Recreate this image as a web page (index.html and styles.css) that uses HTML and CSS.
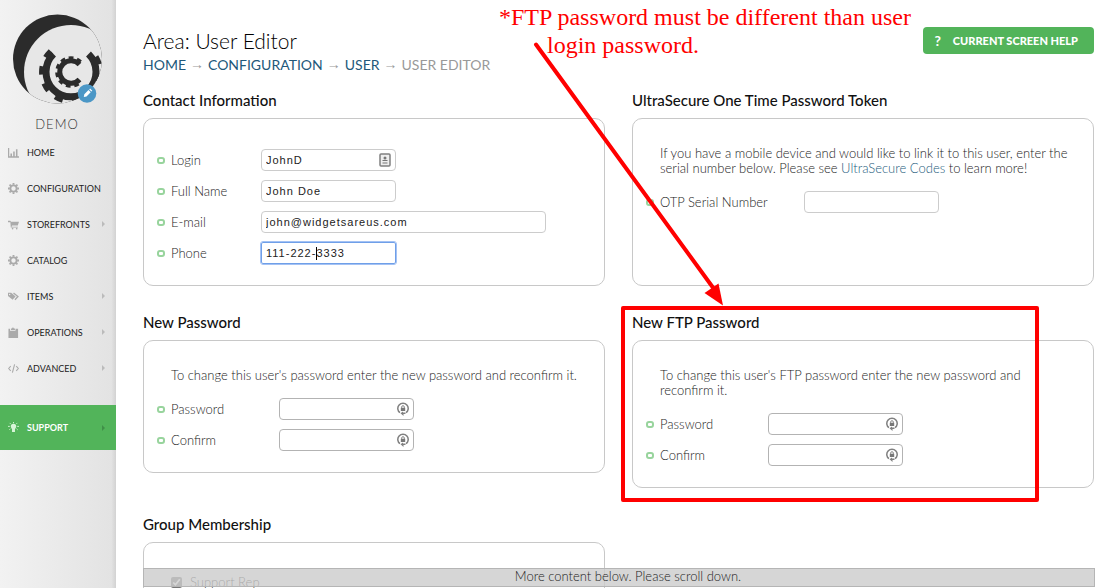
FILE: index.html
```html
<!DOCTYPE html>
<html lang="en">
<head>
<meta charset="utf-8">
<title>User Editor</title>
<link rel="stylesheet" href="styles.css">
</head>
<body>
<svg class="defs" aria-hidden="true">
  <symbol id="gear" viewBox="0 0 12 12"><circle cx="6" cy="6" r="3.400" fill="none" stroke="currentColor" stroke-width="2"/><path d="M6 0v2M6 10v2M0 6h2M10 6h2M1.700 1.700l1.400 1.400M8.900 8.900l1.400 1.400M10.300 1.700L8.900 3.100M3.100 8.900l-1.400 1.400" stroke="currentColor" stroke-width="2"/></symbol>
  <symbol id="lock" viewBox="0 0 12 14"><path d="M3 10.700A5.200 5.200 0 1 1 9 10.700" fill="none" stroke="#808080" stroke-width="1.500"/><path d="M3.500 11.200L6 9.600v1h2.500v1.500H6.500V14z" fill="#808080"/><path d="M3.800 5.800h4.400v3.200H3.800z" fill="#777"/><path d="M4.700 6V5a1.300 1.300 0 0 1 2.600 0v1" fill="none" stroke="#888"/></symbol>
</svg>
<div class="app">
  <aside class="sidebar">
    <div class="brand">
      <svg class="logo" viewBox="0 0 92 92" aria-hidden="true">
        <clipPath id="round"><circle cx="45.500" cy="45" r="44.500"/></clipPath>
        <g clip-path="url(#round)">
          <rect width="92" height="92" fill="#2b2b2b"/>
          <circle cx="59" cy="58" r="47" fill="#e7e7e7"/>
          <g fill="none" stroke="#2b2b2b">
            <path d="M41.500 40A25 25 0 1 0 76.500 40" stroke-width="7"/>
            <path d="M39 37.500A28.700 28.700 0 1 0 79 37.500" stroke-width="6.500" stroke-dasharray="8 9.200"/>
            <path d="M67.500 50.500A11.300 11.300 0 1 0 67.500 65.500" stroke-width="5"/>
            <path d="M68.500 48A13.800 13.800 0 1 0 68.500 68" stroke-width="4" stroke-dasharray="4.500 3.600"/>
          </g>
        </g>
        <circle cx="75" cy="79.500" r="9.300" fill="#4b97c6"/>
        <path d="M71.800 83l.5-2.700 4.200-4.200 2.200 2.200-4.200 4.200zM77.200 75.400l.9-.9 2.200 2.200-.9.900z" fill="#fff"/>
      </svg>
      <div class="brand-name">DEMO</div>
    </div>
    <nav class="nav">
      <a href="#"><svg class="nav-icon" viewBox="0 0 12 12"><path d="M.5 1v10H12M3.500 7v3M6.500 5v5M9.500 2.500V10" fill="none" stroke="currentColor" stroke-width="1.700"/></svg><span>HOME</span></a>
      <a href="#"><svg class="nav-icon"><use href="#gear"/></svg><span>CONFIGURATION</span></a>
      <a href="#"><svg class="nav-icon" viewBox="0 0 12 12"><path d="M0 2h2.500l.8 1H12l-1.300 4H4.500L3.800 8.500h7v.8H3L2.600 3.500H0z" fill="currentColor"/><circle cx="5" cy="10.500" r=".9" fill="currentColor"/><circle cx="9.500" cy="10.500" r=".9" fill="currentColor"/></svg><span>STOREFRONTS</span><i class="caret"></i></a>
      <a href="#"><svg class="nav-icon"><use href="#gear"/></svg><span>CATALOG</span></a>
      <a href="#"><svg class="nav-icon" viewBox="0 0 12 12"><path d="M0 2h3.500l4.800 4-3.300 3.500L0 5.500z" fill="currentColor"/><circle cx="1.800" cy="3.800" r=".8" fill="#eee"/><path d="M6 2.200L10.800 6 7.600 9.500" fill="none" stroke="currentColor" stroke-width="1.500"/></svg><span>ITEMS</span><i class="caret"></i></a>
      <a href="#"><svg class="nav-icon" viewBox="0 0 12 12"><path d="M.5 2h1.700v2h6V2H11v10H.5zM3.200 1.500h1.200a1 1 0 0 1 2 0h1.200v1.700H3.200z" fill="currentColor"/></svg><span>OPERATIONS</span><i class="caret"></i></a>
      <a href="#"><svg class="nav-icon" viewBox="0 0 12 12"><path d="M3 3.500L.7 6 3 8.500M9 3.500L11.300 6 9 8.500M7.200 1.500l-2.400 9" fill="none" stroke="currentColor" stroke-width="1.200"/></svg><span>ADVANCED</span><i class="caret"></i></a>
      <a href="#" class="support"><svg class="nav-icon" viewBox="0 0 12 12"><path d="M3 4.800a3 3 0 0 1 6 0c0 1.400-1.200 2-1.400 3.200v3H4.400V8C4.200 6.800 3 6.200 3 4.800z" fill="currentColor"/><path d="M6 0v1.300M1.800 1l1 1M10.200 1l-1 1M0 4.800h2M10 4.800h2M1.500 8.500l1.200-1.200M10.500 8.500L9.300 7.300" stroke="currentColor"/></svg><span>SUPPORT</span><i class="caret"></i></a>
    </nav>
  </aside>
  <main class="main">
    <header class="top">
      <div>
        <h1>Area: User Editor</h1>
        <nav class="crumbs"><a href="#">HOME</a><i>→</i><a href="#">CONFIGURATION</a><i>→</i><a href="#">USER</a><i>→</i><span>USER EDITOR</span></nav>
      </div>
      <button type="button" class="help"><span class="mark">?</span>CURRENT SCREEN HELP</button>
    </header>
    <form class="sections">
      <section class="tall">
        <h2>Contact Information</h2>
        <div class="card contact">
          <div class="fields">
            <div class="field"><label for="login">Login</label><span class="control"><input id="login" value="JohnD"><svg class="badge" viewBox="0 0 12 14"><rect x="1" y="1" width="10" height="12" rx="1" fill="#eee" stroke="#808080" stroke-width="1.500"/><circle cx="6" cy="5" r="1.500" fill="#777"/><path d="M3.500 7.500h5M3.500 10h5" stroke="#777"/></svg></span></div>
            <div class="field"><label for="name">Full Name</label><span class="control"><input id="name" value="John Doe"></span></div>
            <div class="field"><label for="email">E-mail</label><span class="control wide"><input id="email" value="john@widgetsareus.com"></span></div>
            <div class="field"><label for="phone">Phone</label><span class="control active"><input id="phone" value="111-222-3333"><i class="cursor"></i></span></div>
          </div>
        </div>
      </section>
      <section class="tall">
        <h2>UltraSecure One Time Password Token</h2>
        <div class="card token">
          <p>If you have a mobile device and would like to link it to this user, enter the serial number below. Please see <a href="#">UltraSecure Codes</a> to learn more!</p>
          <div class="fields">
            <div class="field"><label for="otp">OTP Serial Number</label><span class="control"><input id="otp"></span></div>
          </div>
        </div>
      </section>
      <section>
        <h2>New Password</h2>
        <div class="card">
          <p>To change this user's password enter the new password and reconfirm it.</p>
          <div class="fields">
            <div class="field"><label for="pw">Password</label><span class="control"><input id="pw" class="dark" type="password"><svg class="badge"><use href="#lock"/></svg></span></div>
            <div class="field"><label for="pw2">Confirm</label><span class="control"><input id="pw2" class="dark" type="password"><svg class="badge"><use href="#lock"/></svg></span></div>
          </div>
        </div>
      </section>
      <section class="marked">
        <h2>New FTP Password</h2>
        <div class="card">
          <p>To change this user's FTP password enter the new password and reconfirm it.</p>
          <div class="fields">
            <div class="field"><label for="ftp">Password</label><span class="control"><input id="ftp" class="dark" type="password"><svg class="badge"><use href="#lock"/></svg></span></div>
            <div class="field"><label for="ftp2">Confirm</label><span class="control"><input id="ftp2" class="dark" type="password"><svg class="badge"><use href="#lock"/></svg></span></div>
          </div>
        </div>
        <div class="frame"></div>
      </section>
      <section>
        <h2>Group Membership</h2>
        <div class="card groups">
          <label class="check"><input type="checkbox" checked>Support Rep</label>
        </div>
      </section>
    </form>
    <div class="more">More content below. Please scroll down.</div>
  </main>
  <div class="note">*FTP password must be different than user<br><span>login password.</span></div>
  <svg class="arrow" viewBox="0 0 200 270" aria-hidden="true"><path d="M7 4.500L185 249" stroke="#f00" stroke-width="4" stroke-linecap="round"/><path d="M194 265.500L175.500 253 189.500 243.500z" fill="#f00"/></svg>
</div>
</body>
</html>
```
FILE: styles.css
```css
*, *::before { box-sizing: border-box; }
body { margin: 0; font: 300 13px/15px Lato, "Open Sans", sans-serif; color: #1c1c1c; background: #fff; }
a { color: #265c7d; text-decoration: none; }
h1, h2, p { margin: 0; }
.defs { position: absolute; width: 0; height: 0; }
.app { position: relative; display: flex; height: 100vh; overflow: hidden; }

.sidebar { flex: 0 0 116px; min-width: 0; padding-top: 14px; background: linear-gradient(90deg, #f2f2f2, #e3e3e3 96%, #d2d2d2); }
.brand { display: flex; flex-direction: column; align-items: flex-start; height: 120px; padding-left: 12px; }
.logo { width: 92px; height: 92px; }
.brand-name { align-self: stretch; padding: 8px 14px 0 0; text-align: center; font-size: 13px; line-height: 20px; letter-spacing: 1px; color: #333; }
.nav a { display: flex; align-items: center; height: 36px; padding: 0 11px 0 8px; font-size: 9px; font-weight: 400; color: #222; }
.nav-icon { flex: none; width: 11px; height: 11px; margin-right: 8px; color: #aaa; }
.caret { margin-left: auto; border: 3px solid transparent; border-left-color: #bbb; border-right-width: 0; }
.nav .support { height: 45px; margin-top: 19px; background: #52b45a; color: #fff; font-weight: 700; }
.support .nav-icon { color: #d8f5d8; }
.support .caret { border-left-color: #409048; }

.main { flex: 1; min-width: 0; position: relative; padding: 27px 12px 0 27px; }
.top { display: flex; justify-content: space-between; align-items: flex-start; height: 65px; }
h1 { font-size: 21px; line-height: 28px; font-weight: 300; color: #000; }
.crumbs { display: flex; gap: 4px; font-size: 14px; line-height: 20px; font-weight: 400; color: #999; }
.crumbs a { color: #22587a; }
.crumbs i { font: 14px/20px "Liberation Serif", serif; }
.help { display: flex; align-items: center; gap: 12px; height: 27px; padding: 0 16px 0 11px; border: 0; border-radius: 4px; background: #52b45a; color: #fff; font: 900 11px/16px Lato, sans-serif; }
.mark { font-size: 14px; font-weight: 700; }

.sections { display: grid; grid-template-columns: 1fr 1fr; gap: 28px 27px; align-items: start; }
section { display: flex; flex-direction: column; }
.tall { align-self: stretch; }
.tall .card { flex: 1; }
.marked { position: relative; }
h2 { margin-bottom: 10px; font-size: 15px; line-height: 16px; font-weight: 500; color: #111; }
.card { padding: 27px 20px 21px 13px; border: 1px solid #c8c8c8; border-radius: 10px; --label: 108px; }
.contact { --label: 90px; }
.token { --label: 144px; }
p { padding: 0 0 12px 14px; }
.fields { display: grid; gap: 9px; padding-top: 3px; }
.field { display: flex; align-items: center; height: 22px; }
.field::before { content: ""; width: 8px; height: 7px; margin-right: 6px; border: 2px solid #98d49d; border-radius: 3px; }
.field label { width: var(--label); }
.control { position: relative; display: flex; width: 135px; }
.wide { width: 285px; }
.control input { width: 100%; height: 22px; padding: 0 4px; border: 1px solid #ccc; border-radius: 4px; background: #fff; color: #222; font: 11px/15px "Liberation Sans", sans-serif; letter-spacing: 1px; }
.control .dark { border-color: #b3b3b3; }
.active input { border-color: #6f9fe8; border-radius: 2px; outline: 1px solid #a4c2f4; }
.cursor { position: absolute; left: 55px; top: 5px; width: 1px; height: 13px; background: #000; }
.badge { position: absolute; right: 5px; top: 4px; width: 12px; height: 14px; }
.frame { position: absolute; inset: -8px 55px -14px -11px; border: 4px solid #f00; border-radius: 2px; }

.groups { height: 80px; padding: 32px 27px; }
.check { display: flex; align-items: center; gap: 8px; }
.check input { width: 11px; height: 11px; margin: 0; accent-color: #777; }
.more { position: absolute; left: 27px; right: 11px; bottom: 1px; height: 19px; padding-left: 18px; border: 1px solid #b5b5b5; background: rgba(204, 204, 204, 0.800); text-align: center; }

.note { position: absolute; left: 499px; top: 3px; font: 24px/28px "Liberation Serif", serif; color: #f00; }
.note span { padding-left: 48px; }
.arrow { position: absolute; left: 529px; top: 40px; width: 200px; height: 270px; }
```
